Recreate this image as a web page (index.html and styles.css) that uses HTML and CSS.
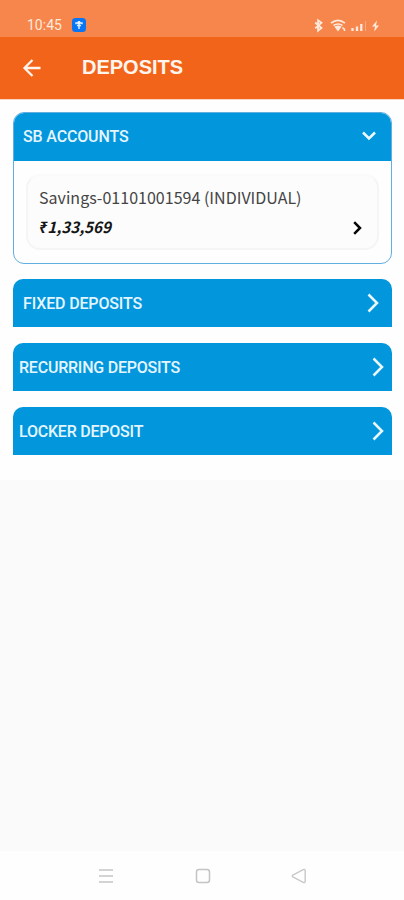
FILE: index.html
```html
<!DOCTYPE html>
<html lang="en">
<head>
<meta charset="utf-8">
<title>Deposits</title>
<link rel="stylesheet" href="styles.css">
</head>
<body>
<div class="screen">
  <div class="status">
    <span class="time">10:45</span>
    <svg class="app-badge" width="14" height="14" viewBox="0 0 14 14"><rect width="14" height="14" rx="3.5" fill="#0875f5"/><path d="M7 3v8M4 6.2V5h6v1.2M5 7.6h4" stroke="#d9ecff" stroke-width="1.5" fill="none"/><circle cx="7" cy="4.8" r="1.7" fill="#e5f2ff"/></svg>
    <svg class="signals" width="68" height="16" viewBox="0 0 68 16" fill="none" stroke="#ffe9dc">
      <path d="M2.2 5.500l6.300 5.500-3.400 2.600V3.200l3.400 2.500-6.300 5.600" stroke-width="1.800"/>
      <path d="M18 6.200q7-5.500 14 0M20.500 8.500q4.500-3 9 0" stroke-width="1.700"/>
      <path d="M22.500 10q2.500-1.500 5 0L25 13.300zM29.500 10.500l1.500 1.500M31.500 11.500v2.500" fill="#ffe9dc" stroke-width="1.500"/>
      <path d="M39.500 11v3M44 9.500v4.500M48.300 7v7" stroke-width="2.300"/>
      <path d="M52.500 4v10" stroke-width="1" opacity=".4"/>
      <path d="M64 3.500L59 9.500h3l-.8 5L66 8.500h-3z" fill="#ffe9dc" stroke="none"/>
    </svg>
  </div>
  <header class="appbar">
    <svg class="back" width="20" height="20" viewBox="0 0 20 20"><path d="M18.500 10H2.500M10.500 2L2.500 10l8 8" fill="none" stroke="#fff3ec" stroke-width="2.300"/></svg>
    <h1>DEPOSITS</h1>
  </header>
  <main class="list">
    <section class="group open">
      <div class="bar">
        <span class="label">SB ACCOUNTS</span>
        <svg class="down" width="14" height="10" viewBox="0 0 14 10"><path d="M1 1.500l6 6 6-6" fill="none" stroke="#eef9ff" stroke-width="2.500"/></svg>
      </div>
      <div class="account">
        <div class="name">Savings-01101001594 (INDIVIDUAL)</div>
        <div class="balance">₹1,33,569</div>
        <svg class="go" width="9" height="14" viewBox="0 0 9 14"><path d="M1.200 1.200L7 7l-5.800 5.800" fill="none" stroke="#080808" stroke-width="2.500"/></svg>
      </div>
    </section>
    <section class="group bar">
      <span class="label">FIXED DEPOSITS</span>
      <svg class="next" width="12" height="20" viewBox="0 0 12 20"><path d="M1.500 1.500L10 10l-8.500 8.500" fill="none" stroke="#e9f7ff" stroke-width="2.500"/></svg>
    </section>
    <section class="group bar wide">
      <span class="label tight">RECURRING DEPOSITS</span>
      <svg class="next" width="12" height="20" viewBox="0 0 12 20"><path d="M1.500 1.500L10 10l-8.500 8.500" fill="none" stroke="#e9f7ff" stroke-width="2.500"/></svg>
    </section>
    <section class="group bar wide">
      <span class="label tight">LOCKER DEPOSIT</span>
      <svg class="next" width="12" height="20" viewBox="0 0 12 20"><path d="M1.500 1.500L10 10l-8.500 8.500" fill="none" stroke="#e9f7ff" stroke-width="2.500"/></svg>
    </section>
  </main>
  <div class="empty"></div>
  <nav class="system">
    <svg width="16" height="16" viewBox="0 0 16 16"><path d="M1 2h14M1 8h14M1 14h14" stroke="#d3d3d3" stroke-width="1.800"/></svg>
    <svg width="16" height="16" viewBox="0 0 16 16"><rect x="1.500" y="1.500" width="13" height="13" rx="2.500" fill="none" stroke="#c4c4c4" stroke-width="1.500"/></svg>
    <svg width="16" height="16" viewBox="0 0 16 16"><path d="M1.800 7.200L12.200 1.700q2-.8 2 1.200v10.200q0 2-2 1.200L1.800 8.800q-1.200-.8 0-1.600z" fill="none" stroke="#c8c8c8" stroke-width="1.400"/></svg>
  </nav>
</div>
</body>
</html>
```
FILE: styles.css
```css
* { box-sizing: border-box; }
body { margin: 0; background: #fff; font-family: Roboto, sans-serif; }
svg { display: block; flex: none; }
.screen { width: 404px; height: 900px; display: flex; flex-direction: column; overflow: hidden; background: #fefefe; }
.status { height: 37px; flex: none; display: flex; align-items: flex-start; padding: 0 23px 0 27px; background: #f7864c; }
.time { width: 45px; margin-top: 17px; font-size: 14px; line-height: 17px; letter-spacing: 0; color: #ffe9dd; }
.app-badge { margin-top: 18px; }
.signals { margin: 17px 0 0 auto; }
.appbar { height: 63px; flex: none; display: flex; align-items: center; padding: 0 22px; background: #f26419; border-bottom: 1px solid #fbd3c3; }
.back { margin-right: 40px; }
h1 { margin: -2px 0 0; font: bold 20px/24px "Liberation Sans", sans-serif; letter-spacing: 0; color: #fff5ef; }
.list { height: 380px; flex: none; display: flex; flex-direction: column; gap: 16px; padding: 12px 12px 0 13px; }
.group { flex: none; border-radius: 10px 10px 0 0; }
.open { height: 152px; margin-bottom: -1px; border: 1px solid #62aee0; border-radius: 11px; overflow: hidden; }
.bar { height: 48px; display: flex; align-items: center; justify-content: space-between; padding: 2px 13px 0 10px; background: #0297dc; }
.open .bar { margin: -1px -1px 0; height: 49px; padding: 1px 16px 0 10px; }
.wide { padding: 2px 8px 0 6px; }
.next { margin-top: -2px; }
.down { margin-top: -3px; }
.label { font-size: 16px; line-height: 20px; font-weight: 500; letter-spacing: -.15px; color: #e5f5ff; white-space: nowrap; }
.tight { letter-spacing: -.22px; }
.account { position: relative; height: 76px; margin: 13px 12px 0; padding: 8px 0 0 11px; border: 2px solid #f5f5f5; border-top-color: #fafafa; border-radius: 14px; background: #fcfcfc; font-family: "Noto Sans CJK SC", "Noto Sans", sans-serif; }
.name { font-size: 16px; line-height: 26px; letter-spacing: .02px; color: #444; white-space: nowrap; }
.balance { margin-top: 3px; font-size: 15.2px; line-height: 26px; font-weight: bold; font-style: italic; color: #151515; }
.go { position: absolute; right: 15px; bottom: 13px; }
.empty { height: 371px; flex: none; background: #fafafa; }
.system { flex: 1; display: flex; justify-content: space-between; align-items: center; padding: 1px 97px 0 98px; background: #fefefe; }
```
